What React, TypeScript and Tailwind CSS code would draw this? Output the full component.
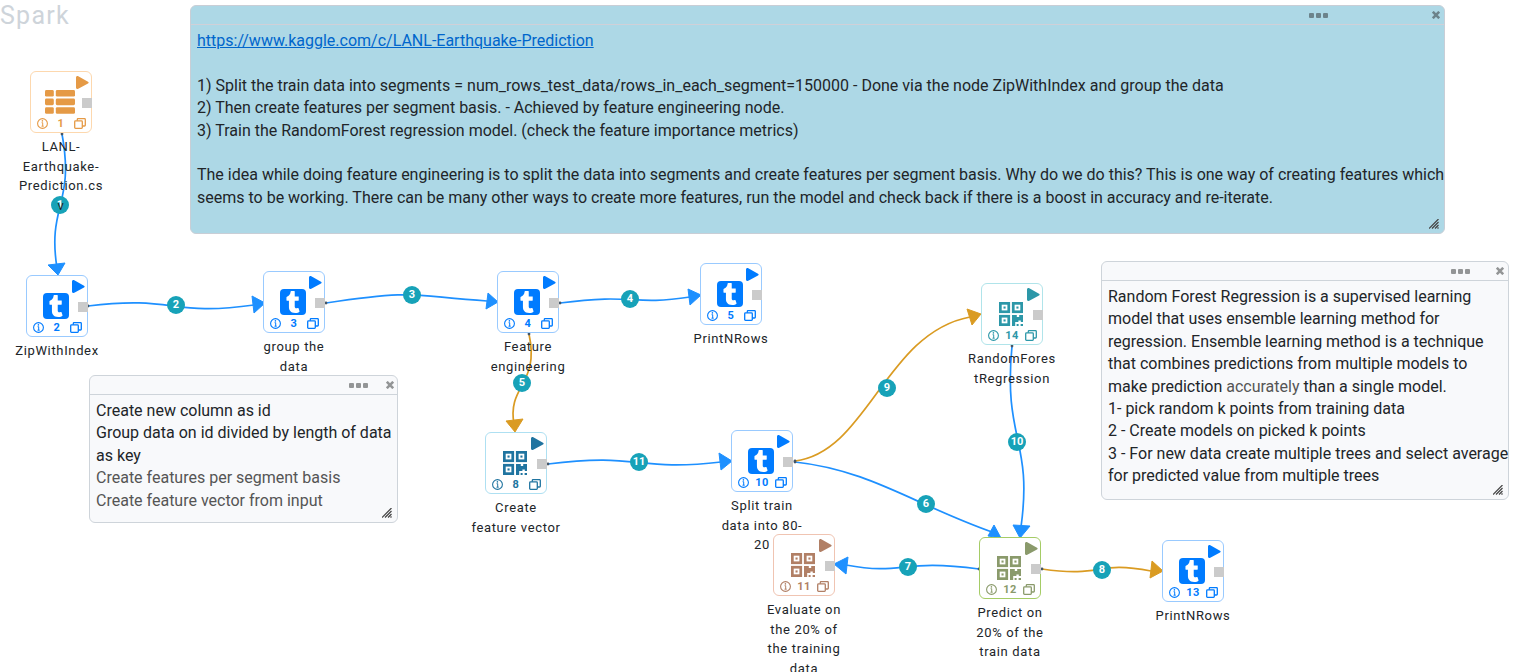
import type { ReactNode } from "react";
import { FaTumblr } from "react-icons/fa";

type Kind = "list" | "tumblr" | "qr";

type FlowNode = {
  id: number;
  x: number;
  y: number;
  label: string;
  kind: Kind;
  tone: string;
};

const BLUE = "border-[#99caff] text-[#007bff]";

const nodes: FlowNode[] = [
  { id: 1, x: 30, y: 71, label: "LANL-Earthquake-Prediction.csv", kind: "list", tone: "border-[#fdd8ae] text-[#e59a46]" },
  { id: 2, x: 26, y: 275, label: "ZipWithIndex", kind: "tumblr", tone: BLUE },
  { id: 3, x: 263, y: 271, label: "group the data", kind: "tumblr", tone: BLUE },
  { id: 4, x: 497, y: 271, label: "Feature engineering", kind: "tumblr", tone: BLUE },
  { id: 5, x: 700, y: 263, label: "PrintNRows", kind: "tumblr", tone: BLUE },
  { id: 8, x: 485, y: 432, label: "Create feature vector", kind: "qr", tone: "border-[#aee0f2] text-[#2074a0]" },
  { id: 10, x: 731, y: 430, label: "Split train data into 80-20", kind: "tumblr", tone: BLUE },
  { id: 11, x: 773, y: 534, label: "Evaluate on the 20% of the training data", kind: "qr", tone: "border-[#f0c4b2] text-[#b17f65]" },
  { id: 12, x: 979, y: 537, label: "Predict on 20% of the train data", kind: "qr", tone: "border-[#a5cc66] text-[#8a9a6b]" },
  { id: 13, x: 1162, y: 540, label: "PrintNRows", kind: "tumblr", tone: BLUE },
  { id: 14, x: 981, y: 283, label: "RandomForestRegression", kind: "qr", tone: "border-[#b0e4ea] text-[#2c97a8]" },
];

type Edge = {
  id: number;
  color: string;
  start: [number, number];
  curve: string;
  arrow: string;
  badge: [number, number];
};

const DODGER = "#1e90ff";
const GOLD = "#da9b22";

const edges: Edge[] = [
  { id: 1, color: DODGER, start: [62, 134], curve: "C75 205 47 205 57 268", arrow: "48,265 65,263 58,275", badge: [60, 205] },
  { id: 2, color: DODGER, start: [88, 306], curve: "C176 295 170 317 254 305", arrow: "252,296 254,313 265,303", badge: [176, 305] },
  { id: 3, color: DODGER, start: [326, 303], curve: "C420 289 410 296 487 301", arrow: "488,293 486,309 498,302", badge: [412, 295] },
  { id: 4, color: DODGER, start: [560, 303], curve: "C635 293 630 306 690 297", arrow: "688,289 690,305 701,295", badge: [630, 299] },
  { id: 5, color: GOLD, start: [529, 334], curve: "C540 385 507 385 514 424", arrow: "506,421 523,419 515,432", badge: [522, 383] },
  { id: 6, color: DODGER, start: [795, 462], curve: "C870 470 915 505 992 532", arrow: "994,525 988,536 1001,538", badge: [926, 504] },
  { id: 7, color: DODGER, start: [979, 569], curve: "C900 558 905 576 846 565", arrow: "848,557 846,574 834,564", badge: [908, 567] },
  { id: 8, color: GOLD, start: [1042, 569], curve: "C1105 578 1095 560 1151 571", arrow: "1152,561 1150,578 1163,571", badge: [1102, 570] },
  { id: 9, color: GOLD, start: [795, 461], curve: "C868 452 885 333 970 317", arrow: "967,309 972,325 981,314", badge: [887, 388] },
  { id: 10, color: DODGER, start: [1012, 346], curve: "C1003 440 1033 440 1021 527", arrow: "1013,525 1030,526 1020,538", badge: [1017, 442] },
  { id: 11, color: DODGER, start: [548, 464], curve: "C640 452 635 472 721 462", arrow: "719,453 721,470 732,461", badge: [639, 462] },
];

function PlayIcon() {
  return (
    <svg viewBox="0 0 13 13" className="h-[13px] w-[13px]" fill="currentColor" aria-hidden="true">
      <path d="M0 1.6C0 .3 1.2-.3 2.3.3L12 5.7c.9.5.9 1.3 0 1.8L2.3 12.8C1.2 13.4 0 12.8 0 11.6Z" />
    </svg>
  );
}

function InfoIcon() {
  return (
    <svg viewBox="0 0 11 11" className="h-[11px] w-[11px]" fill="none" aria-hidden="true">
      <circle cx="5.5" cy="5.5" r="4.9" stroke="currentColor" strokeWidth="1.1" />
      <path d="M4.6 4.7h1.1v3.4M4.5 8.2h2.2" stroke="currentColor" strokeWidth="1" />
      <circle cx="5.4" cy="2.9" r=".8" fill="currentColor" />
    </svg>
  );
}

function CopyIcon() {
  return (
    <svg viewBox="0 0 12 11" className="h-[11px] w-[12px]" fill="none" stroke="currentColor" strokeWidth="1.3" aria-hidden="true">
      <rect x=".7" y="2.9" width="7.6" height="7.4" rx=".8" />
      <path d="M3.3 2.8V1.4c0-.5.3-.8.8-.8h6.4c.5 0 .8.3.8.8v5.8c0 .5-.3.8-.8.8H8.5" />
    </svg>
  );
}

function ListIcon() {
  return (
    <svg viewBox="0 0 30 24" className="h-6 w-[30px]" fill="currentColor" aria-hidden="true">
      {[0, 8.6, 17.2].map((y) => (
        <g key={y}>
          <rect y={y} width="8.8" height="6.6" rx="1.4" />
          <rect x="10.8" y={y} width="19.2" height="6.6" rx="1.4" />
        </g>
      ))}
    </svg>
  );
}

function QrIcon() {
  return (
    <svg viewBox="0 0 24 24" className="h-6 w-6" fill="currentColor" aria-hidden="true">
      <g fill="none" stroke="currentColor" strokeWidth="2.7">
        <rect x="1.35" y="1.35" width="8.4" height="8.4" />
        <rect x="14.25" y="1.35" width="8.4" height="8.4" />
        <rect x="1.35" y="14.25" width="8.4" height="8.4" />
      </g>
      <rect x="4.5" y="4.5" width="2.1" height="2.1" />
      <rect x="17.4" y="4.5" width="2.1" height="2.1" />
      <rect x="4.5" y="17.4" width="2.1" height="2.1" />
      <path d="M13 13h4.8v2h2.4v-2H24v7h-2.2v-1.4h-2.4V20h-3.2v4H13z" />
      <rect x="17.6" y="22" width="2" height="2" />
      <rect x="21.6" y="22" width="2.4" height="2" />
    </svg>
  );
}

function KindIcon({ kind }: { kind: Kind }) {
  if (kind === "list") return <ListIcon />;
  if (kind === "qr") return <QrIcon />;
  return (
    <span className="flex h-[26px] w-[26px] items-center justify-center rounded bg-current">
      <FaTumblr className="h-[22px] w-[14px] text-white" />
    </span>
  );
}

function NodeCard({ node }: { node: FlowNode }) {
  return (
    <div className="absolute flex w-[90px] -translate-x-1/2 flex-col items-center" style={{ left: node.x + 31, top: node.y }}>
      <div className={`relative flex h-[62px] w-[62px] flex-col rounded-md border bg-white pt-1 ${node.tone}`}>
        <button type="button" aria-label={`Run ${node.label}`} className="mr-0.5 self-end">
          <PlayIcon />
        </button>
        <div className="flex h-[26px] items-center justify-center pr-[3px]">
          <KindIcon kind={node.kind} />
        </div>
        <div className="flex items-center justify-between pt-0.5 pr-[5px] pl-1.5">
          <button type="button" aria-label={`About ${node.label}`}>
            <InfoIcon />
          </button>
          <span className="text-[11px] leading-[13px] font-bold tracking-wider">{node.id}</span>
          <button type="button" aria-label={`Duplicate ${node.label}`}>
            <CopyIcon />
          </button>
        </div>
        <span className="absolute top-[26px] -right-px h-[10px] w-[10px] bg-[#cbcbcb]" />
      </div>
      <p className="w-full pt-1 text-center text-[13px] leading-normal tracking-wider break-words text-[#212529]">{node.label}</p>
    </div>
  );
}

function Edges() {
  return (
    <svg className="absolute inset-0 h-full w-full" aria-hidden="true">
      {edges.map((e) => (
        <g key={e.id}>
          <path d={`M${e.start[0]} ${e.start[1]} ${e.curve}`} fill="none" stroke={e.color} strokeWidth="1.7" />
          <circle cx={e.start[0]} cy={e.start[1]} r="1.4" fill="#456" />
          <polygon points={e.arrow} fill={e.color} stroke={e.color} />
        </g>
      ))}
    </svg>
  );
}

function Note({ frame, line, dots, children }: { frame: string; line: string; dots: string; children: ReactNode }) {
  return (
    <section className={`absolute flex flex-col rounded-md border ${frame}`}>
      <header className={`flex h-[19px] shrink-0 items-center justify-end border-b ${line} ${dots}`}>
        <button type="button" aria-label="Note options">
          <svg viewBox="0 0 19 5" className="h-[5px] w-[19px]" fill="currentColor" aria-hidden="true">
            <rect width="5" height="5" rx="1" />
            <rect x="7" width="5" height="5" rx="1" />
            <rect x="14" width="5" height="5" rx="1" />
          </svg>
        </button>
        <button type="button" aria-label="Close note">
          <svg viewBox="0 0 8 8" className="h-2 w-2" stroke="currentColor" strokeWidth="2.6" aria-hidden="true">
            <path d="M.8.8l6.4 6.4M7.2.8L.8 7.2" />
          </svg>
        </button>
      </header>
      <div className="min-h-0 flex-1 pt-[5px] pl-1.5 text-base leading-[1.4] whitespace-nowrap text-[#212529]">{children}</div>
      <svg viewBox="0 0 10 10" className="mr-[5px] mb-1 h-[10px] w-[10px] shrink-0 self-end" stroke="#444" strokeWidth="1.2" aria-hidden="true">
        <path d="M0 9.5L9.5 0M3 9.5L9.5 3M6 9.5L9.5 6M8.5 9.5l1-1" />
      </svg>
    </section>
  );
}

export default function App() {
  return (
    <main className="relative h-screen overflow-hidden bg-white font-[Roboto,sans-serif]">
      <h1 className="text-[25px] leading-8 tracking-wider text-[#ced4da]">Spark</h1>
      <Edges />
      {edges.map((e) => (
        <span
          key={e.id}
          className="absolute flex h-[18px] w-[18px] -translate-x-1/2 -translate-y-1/2 items-center justify-center rounded-full bg-[#17a2b8] text-[11px] font-bold text-white"
          style={{ left: e.badge[0], top: e.badge[1] }}
        >
          {e.id}
        </span>
      ))}
      {nodes.map((n) => (
        <NodeCard key={n.id} node={n} />
      ))}

      <Note
        frame="top-[5px] left-[190px] h-[229px] w-[1255px] border-[#c9ced6] bg-[#add8e6]"
        line="border-[#d0d0d8]"
        dots="gap-[104px] pr-1 text-[#6c838b]"
      >
        <p>
          <a href="https://www.kaggle.com/c/LANL-Earthquake-Prediction" className="text-[#0066cc] underline">
            https://www.kaggle.com/c/LANL-Earthquake-Prediction
          </a>
        </p>
        <br />
        <p>1) Split the train data into segments = num_rows_test_data/rows_in_each_segment=150000 - Done via the node ZipWithIndex and group the data</p>
        <p>2) Then create features per segment basis. - Achieved by feature engineering node.</p>
        <p>3) Train the RandomForest regression model. (check the feature importance metrics)</p>
        <br />
        <p>
          The idea while doing feature engineering is to split the data into segments and create features per segment basis. Why do we do this? This is one way of
          creating features which
          <br />
          seems to be working. There can be many other ways to create more features, run the model and check back if there is a boost in accuracy and re-iterate.
        </p>
      </Note>

      <Note
        frame="top-[375px] left-[89px] h-[148px] w-[309px] border-[#ced4da] bg-[#f8f9fb]"
        line="border-[#ced4da]"
        dots="gap-[18px] pr-[3px] text-[#939596]"
      >
        <p>Create new column as id</p>
        <p>
          Group data on id divided by length of data
          <br />
          as key
        </p>
        <p className="text-[#555]">Create features per segment basis</p>
        <p className="text-[#555]">Create feature vector from input</p>
      </Note>

      <Note
        frame="top-[261px] left-[1101px] h-[239px] w-[408px] border-[#ced4da] bg-[#f8f9fb]"
        line="border-[#ced4da]"
        dots="gap-[26px] pr-1 text-[#939596]"
      >
        <p>
          Random Forest Regression is a supervised learning
          <br />
          model that uses ensemble learning method for
          <br />
          regression. Ensemble learning method is a technique
          <br />
          that combines predictions from multiple models to
          <br />
          make prediction <span className="text-[#555]">accurately</span> than a single model.
        </p>
        <p>1- pick random k points from training data</p>
        <p>2 - Create models on picked k points</p>
        <p>
          3 - For new data create multiple trees and select average
          <br />
          for predicted value from multiple trees
        </p>
      </Note>
    </main>
  );
}
